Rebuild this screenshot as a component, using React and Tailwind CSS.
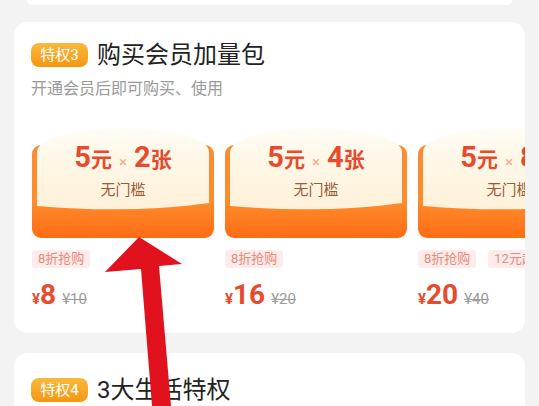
import React from 'react';

const FONT = "font-['Roboto','Noto_Sans_CJK_SC',sans-serif]";

const coupons = [
  { count: 2, price: 8, original: 10, tags: ['8折抢购'] },
  { count: 4, price: 16, original: 20, tags: ['8折抢购'] },
  { count: 8, price: 20, original: 40, tags: ['8折抢购', '12元起'] },
];

function Badge({ n }) {
  return (
    <div className="flex h-[24px] w-[57px] shrink-0 items-center justify-center rounded-[8px] bg-linear-to-b from-[#fbb83a] to-[#f2980c] text-[15px] leading-none text-white">
      特权{n}
    </div>
  );
}

function CouponCard({ count }) {
  return (
    <div className="relative h-[112px] w-[182px] shrink-0">
      <svg className="absolute inset-0" width="182" height="112" viewBox="0 0 182 112">
        <defs>
          <linearGradient id="frameGrad" x1="0" y1="0" x2="0" y2="1">
            <stop offset="0" stopColor="#ff8a34" />
            <stop offset="0.6" stopColor="#ff8c2c" />
            <stop offset="1" stopColor="#ff6c14" />
          </linearGradient>
          <linearGradient id="creamGrad" x1="0" y1="0" x2="0" y2="1">
            <stop offset="0" stopColor="#fffdf6" />
            <stop offset="0.35" stopColor="#fff8e8" />
            <stop offset="1" stopColor="#fff1da" />
          </linearGradient>
        </defs>
        <rect x="0" y="19" width="182" height="93" rx="9" fill="url(#frameGrad)" />
        <path
          d="M5,26 C5,10 58,2 91,2 C124,2 177,10 177,26 L177,77 Q100,88 5,80 Z"
          fill="url(#creamGrad)"
        />
      </svg>
      <div className="relative flex flex-col items-center pt-[17px]">
        <div className="flex items-baseline font-bold leading-none text-[#e84a2e]">
          <span className="text-[29px]">5</span>
          <span className="text-[21px]">元</span>
          <span className="mx-[7px] text-[15px] font-normal text-[#f4ab90]">×</span>
          <span className="text-[29px]">{count}</span>
          <span className="text-[21px]">张</span>
        </div>
        <div className="mt-[11px] text-[15px] leading-none text-[#9a5b3c]">无门槛</div>
      </div>
    </div>
  );
}

function CouponItem({ count, price, original, tags }) {
  return (
    <div className="flex w-[182px] shrink-0 flex-col">
      <CouponCard count={count} />
      <div className="mt-[12px] flex gap-[12px]">
        {tags.map((t) => (
          <span
            key={t}
            className="h-[18px] shrink-0 rounded-[3px] bg-[#fdeceb] px-[6px] text-[13px] leading-[18px] text-[#e98a78]"
          >
            {t}
          </span>
        ))}
      </div>
      <div className="mt-[13px] flex items-baseline leading-none">
        <span className="text-[15px] font-bold text-[#e84a2e]">¥</span>
        <span className="text-[28px] font-bold text-[#e84a2e]">{price}</span>
        <span className="ml-[6px] text-[15px] text-[#9b9b9b] line-through">¥{original}</span>
      </div>
    </div>
  );
}

export default function App() {
  return (
    <div className={`relative h-[406px] w-[539px] overflow-hidden bg-[#f3f3f3] ${FONT}`}>
      <div className="mx-[27px] h-[5px] rounded-b-[10px] bg-white" />

      <div className="mx-[14px] mt-[17px] h-[311px] overflow-hidden rounded-[14px] bg-white pl-[17px] pt-[17px]">
        <div className="flex h-[32px] items-center">
          <Badge n={3} />
          <span className="ml-[9px] text-[24px] leading-none text-[#222]">购买会员加量包</span>
        </div>
        <div className="mt-[7px] text-[16px] leading-[22px] text-[#9a9a9a]">开通会员后即可购买、使用</div>
        <div className="ml-[1px] mt-[26px] flex gap-[11px]">
          {coupons.map((c) => (
            <CouponItem key={c.count} {...c} />
          ))}
        </div>
      </div>

      <div className="mx-[14px] mt-[20px] h-[120px] rounded-[14px] bg-white pl-[17px] pt-[21px]">
        <div className="flex h-[32px] items-center">
          <Badge n={4} />
          <span className="ml-[9px] text-[24px] leading-none text-[#222]">3大生活特权</span>
        </div>
      </div>

      <svg
        className="pointer-events-none absolute inset-0"
        width="539"
        height="406"
        viewBox="0 0 539 406"
      >
        <polygon
          points="139,237 182,264 159,266 171,406 152,406 141,269 105,272"
          fill="#e1121e"
        />
      </svg>
    </div>
  );
}
